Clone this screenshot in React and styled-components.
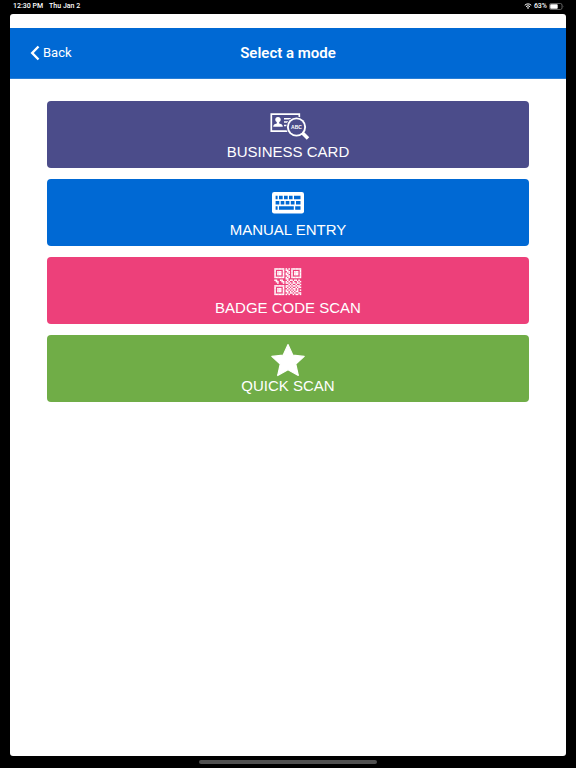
import styled, { createGlobalStyle } from 'styled-components';

const QR_ROWS = [
  '1111111.1.1.1111111',
  '1.....1.11..1.....1',
  '1.111.1..11.1.111.1',
  '1.111.1.1.1.1.111.1',
  '1.111.1.11..1.111.1',
  '1.....1..11.1.....1',
  '1111111.1.1.1111111',
  '........11.........',
  '11..11...1.11.11.1.',
  '.11..11.1.1..1..1.1',
  '..1...1.11.1.11.11.',
  '..........1.1..1..1',
  '1111111.11.1.11.11.',
  '1.....1.1.1.1..1.11',
  '1.111.1..1.1.11.1..',
  '1.111.1.1.1.1.1.1.1',
  '1.111.1.11.1.1.11..',
  '1.....1..1.11.1..11',
  '1111111.1.1..1.11.1',
];

const BusinessCardIcon = () => (
  <Icon viewBox='0 0 44 34' aria-hidden='true'>
    <path d='M5.3 5.1h28v17H5.3z' fill='none' stroke='#fff' strokeWidth='1.7' />
    <circle cx='12' cy='10.6' r='2.7' />
    <path d='M10.8 12.4h2.4v2c2.4.4 3.6 1.2 3.6 3.4H7.2c0-2.2 1.2-3 3.6-3.4z' />
    <path d='M18 9.7h12M18 13h6M18 16.4h5' stroke='#fff' strokeWidth='1.5' />
    <circle cx='30.5' cy='18' r='10.4' fill='#4b4c8a' />
    <path d='M36 23.500l6 6' stroke='#fff' strokeWidth='3.6' />
    <circle cx='30.5' cy='18' r='9.6' fill='#fff' />
    <circle cx='30.5' cy='18' r='7.7' fill='#4b4c8a' />
    <IconText x='30.5' y='20'>
      ABC
    </IconText>
  </Icon>
);

const KeyboardIcon = () => (
  <Icon viewBox='0 0 44 34' aria-hidden='true'>
    <rect x='6' y='5' width='32' height='21.5' rx='2.2' />
    <path
      fill='#0069d4'
      d='M9.6 8.8h2v3.4h-2zM13 8.8h3.7v3.4H13zM18 8.8h3.7v3.4H18zM23 8.8h3.6v3.4H23zM28 8.8h6.5v3.4H28z
        M9.6 14h3.7v3.5H9.6zM14.7 14h3.6v3.5h-3.6zM19.7 14h3.7v3.5h-3.7zM24.8 14h3.7v3.5h-3.7zM30 14h4.5v3.5H30z
        M9.6 19.3h2v3.5h-2zM13 19.3h14.8v3.5H13zM29.2 19.3h5.3v3.5h-5.3z'
    />
  </Icon>
);

const QrIcon = () => (
  <Icon viewBox='0 0 44 34' aria-hidden='true'>
    <g transform='translate(8.3 3.2) scale(1.41)'>
      {QR_ROWS.map((row, y) =>
        row
          .split('')
          .map(
            (cell, x) =>
              cell === '1' && <rect key={`${x}-${y}`} x={x} y={y} width='1.1' height='1.1' />
          )
      )}
    </g>
  </Icon>
);

const StarIcon = () => (
  <Icon viewBox='0 0 44 34' aria-hidden='true'>
    <path
      d='M22 1.5l4.9 10.7 11.3 1.2-8.4 7.7 2.5 11.4L22 26.7l-10.3 5.8 2.5-11.4-8.4-7.7 11.3-1.2z'
      stroke='#fff'
      strokeWidth='1.2'
      strokeLinejoin='round'
    />
  </Icon>
);

const modes = [
  { label: 'BUSINESS CARD', color: '#4b4c8a', icon: <BusinessCardIcon /> },
  { label: 'MANUAL ENTRY', color: '#0069d4', icon: <KeyboardIcon /> },
  { label: 'BADGE CODE SCAN', color: '#ed407a', icon: <QrIcon /> },
  { label: 'QUICK SCAN', color: '#70ad47', icon: <StarIcon /> },
];

const App = () => {
  return (
    <>
      <GlobalStyle />
      <Device>
        <StatusBar>
          <StatusGroup>
            <span>12:30 PM</span>
            <span>Thu Jan 2</span>
          </StatusGroup>
          <Indicators>
            <WifiIcon viewBox='0 0 16 12' aria-hidden='true'>
              <path
                d='M1.5 4.5a9.2 9.2 0 0 1 13 0M4 7.3a5.7 5.7 0 0 1 8 0'
                fill='none'
                stroke='#fff'
                strokeWidth='2'
              />
              <path d='M8 12L5.6 9.5a3.4 3.4 0 0 1 4.8 0z' fill='#fff' />
            </WifiIcon>
            <span>63%</span>
            <BatteryIcon viewBox='0 0 15 7' aria-hidden='true'>
              <rect x='.5' y='.5' width='12.5' height='6' rx='1.6' fill='none' stroke='#777' strokeWidth='.8' />
              <rect x='1.2' y='1.2' width='7.5' height='4.6' rx='.8' fill='#fff' />
              <path d='M13.8 2.3q1.2 1.2 0 2.4z' fill='#777' />
            </BatteryIcon>
          </Indicators>
        </StatusBar>
        <Screen>
          <Header>
            <BackButton type='button'>
              <Chevron viewBox='0 0 10 16' aria-hidden='true'>
                <path d='M8.5 1.5L2.2 8l6.3 6.5' fill='none' stroke='#fff' strokeWidth='2.4' />
              </Chevron>
              Back
            </BackButton>
            <Title>Select a mode</Title>
          </Header>
          <ModeList>
            {modes.map(({ label, color, icon }) => (
              <ModeButton key={label} type='button' $color={color}>
                {icon}
                {label}
              </ModeButton>
            ))}
          </ModeList>
        </Screen>
        <HomeArea>
          <HomeBar />
        </HomeArea>
      </Device>
    </>
  );
};

const GlobalStyle = createGlobalStyle`
  * {
    box-sizing: border-box;
  }
  body {
    margin: 0;
    background: #000;
  }
  button {
    border: 0;
    padding: 0;
    cursor: pointer;
  }
`;
const Device = styled.div`
  display: flex;
  flex-direction: column;
  min-height: 100vh;
  background: #000;
  color: #fff;
  font-family: Roboto, 'Liberation Sans', sans-serif;
`;
const StatusBar = styled.div`
  display: flex;
  align-items: center;
  justify-content: space-between;
  height: 14px;
  padding: 0 12px 2px 13px;
  font-size: 7px;
  font-weight: 500;
  line-height: 12px;
`;
const StatusGroup = styled.div`
  display: flex;
  gap: 6px;
`;
const Indicators = styled.div`
  display: flex;
  align-items: center;
  gap: 2px;
`;
const WifiIcon = styled.svg`
  width: 8px;
  height: 6px;
`;
const BatteryIcon = styled.svg`
  width: 15px;
  height: 7px;
`;
const Screen = styled.main`
  flex: 1;
  margin: 0 10px;
  padding-top: 14px;
  border-radius: 3px;
  background: #fff;
`;
const Header = styled.header`
  display: grid;
  grid-template-columns: 1fr auto 1fr;
  align-items: center;
  height: 51px;
  padding: 0 20px;
  border-bottom: 1px solid #2a7fd6;
  background: #0069d4;
`;
const BackButton = styled.button`
  display: flex;
  align-items: center;
  justify-self: start;
  gap: 3px;
  background: none;
  color: #fff;
  font-family: inherit;
  font-size: 13px;
  line-height: 18px;
`;
const Chevron = styled.svg`
  width: 10px;
  height: 16px;
`;
const Title = styled.h1`
  margin: 0;
  font-size: 15px;
  font-weight: 600;
  line-height: 18px;
`;
const ModeList = styled.div`
  display: grid;
  gap: 11px;
  padding: 22px 37px;
`;
const ModeButton = styled.button`
  display: flex;
  flex-direction: column;
  align-items: center;
  height: 67px;
  padding-top: 8px;
  border-radius: 4px;
  background: ${(props) => props.$color};
  color: #fff;
  font-family: 'Liberation Sans', Arial, sans-serif;
  font-size: 15px;
  line-height: 18px;
`;
const Icon = styled.svg`
  flex: none;
  width: 44px;
  height: 34px;
  fill: #fff;
`;
const IconText = styled.text`
  font-family: 'Liberation Sans', Arial, sans-serif;
  font-size: 5px;
  font-weight: 700;
  text-anchor: middle;
`;
const HomeArea = styled.div`
  display: flex;
  align-items: center;
  justify-content: center;
  height: 12px;
`;
const HomeBar = styled.div`
  width: 31%;
  height: 4px;
  border-radius: 2px;
  background: #505050;
`;

export default App;
